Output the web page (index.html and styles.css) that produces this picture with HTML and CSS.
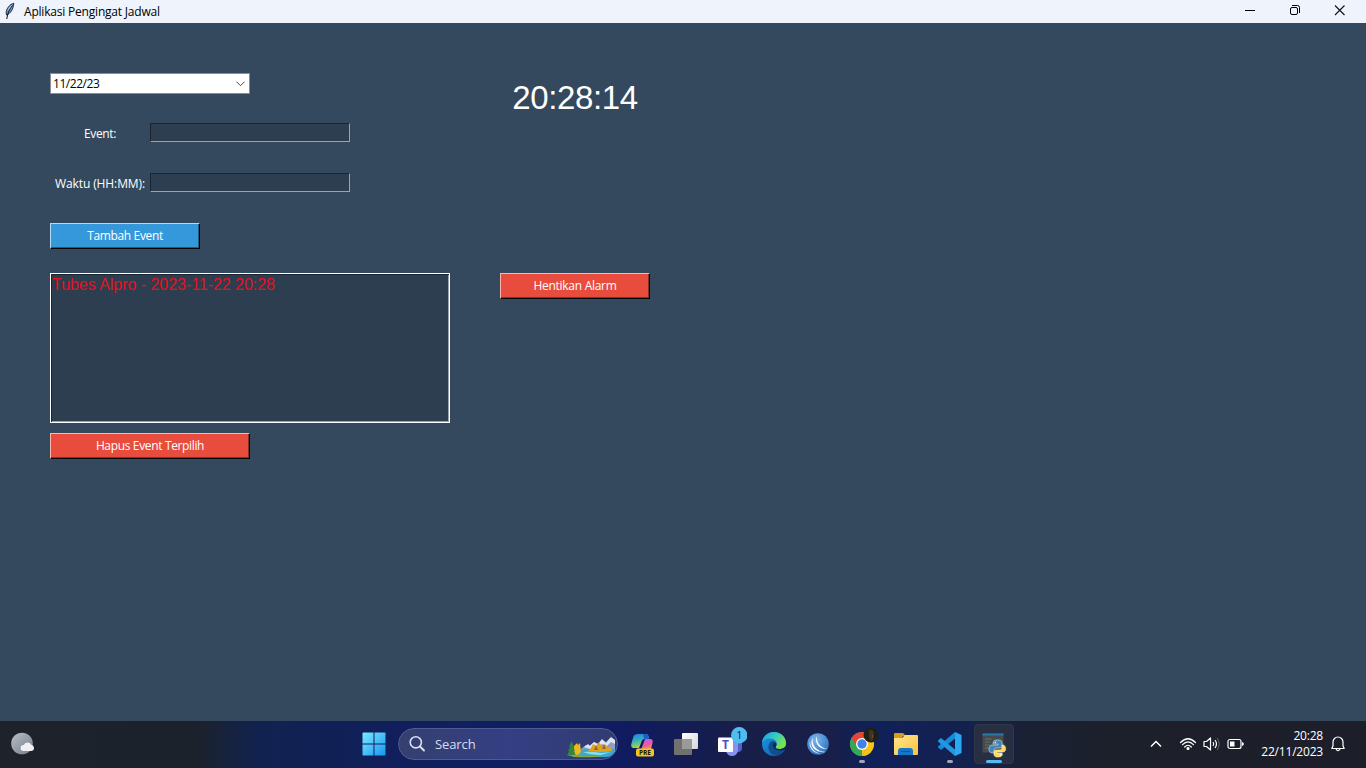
FILE: index.html
```html
<!DOCTYPE html>
<html lang="id">
<head>
<meta charset="utf-8">
<title>Aplikasi Pengingat Jadwal</title>
<link rel="stylesheet" href="styles.css">
</head>
<body>
<div class="desktop">
  <header class="titlebar">
    <svg class="feather" width="12" height="18" viewBox="0 0 12 18"><path d="M9.800 1.300C6 2 3 6 2.300 9.500 2 11 2.200 12.300 2.700 13 6.500 11.500 9.200 7.500 9.800 1.300z" fill="#6d98cf" stroke="#222d3f" stroke-width="1"/><path d="M8.500 3.500C5.500 7 3.500 11 2.800 17" fill="none" stroke="#111" stroke-width="1"/><path d="M7.300 3.500L4 8" stroke="#b8d0ee"/></svg>
    <h1 class="title">Aplikasi Pengingat Jadwal</h1>
    <div class="controls">
      <svg width="46" height="22" viewBox="0 0 46 22"><path d="M18 10.500h10" stroke="#000"/></svg>
      <svg width="45" height="22" viewBox="0 0 45 22" fill="none" stroke="#000"><rect x="17.500" y="7.500" width="7" height="7" rx="1.500"/><path d="M19 5.500h5.500a2 2 0 0 1 2 2V13"/></svg>
      <svg width="46" height="22" viewBox="0 0 46 22"><path d="M17 5.500l9.500 9.500M26.500 5.500l-9.500 9.500" stroke="#111" stroke-width="1.100"/></svg>
    </div>
  </header>

  <main class="app">
    <section class="form">
      <div class="combo"><span class="combo-value">11/22/23</span><svg width="9" height="6" viewBox="0 0 9 6"><path d="M.5.700l4 4 4-4" fill="none" stroke="#444"/></svg></div>
      <div class="field"><span class="label"><span class="t-event">Event:</span></span><div class="entry"></div></div>
      <div class="field"><span class="label"><span class="t-time">Waktu (HH:MM):</span></span><div class="entry"></div></div>
      <div class="btn add"><span class="t-add">Tambah Event</span></div>
      <div class="list"><div class="item">Tubes Alpro - 2023-11-22 20:28</div></div>
      <div class="btn delete"><span class="t-delete">Hapus Event Terpilih</span></div>
    </section>
    <section class="alarm">
      <div class="clock">20:28:14</div>
      <div class="btn stop"><span class="t-stop">Hentikan Alarm</span></div>
    </section>
  </main>

  <footer class="taskbar">
    <div class="weather">
      <svg width="26" height="26" viewBox="0 0 26 26"><defs><linearGradient id="moon" x1="0" y1="0" x2="1" y2="1"><stop offset="0" stop-color="#b9bfca"/><stop offset="1" stop-color="#747c88"/></linearGradient></defs><circle cx="12" cy="12.500" r="10.800" fill="url(#moon)"/><path d="M13.500 20a3 3 0 0 1 .2-6 4.200 4.200 0 0 1 7.500-.3 3.200 3.200 0 0 1 .3 6.300z" fill="#eef0f3"/></svg>
    </div>
    <nav class="apps">
      <div class="slot start"><svg width="24" height="24" viewBox="0 0 24 24"><defs><linearGradient id="win" x1="0" y1="0" x2="1" y2="1"><stop offset="0" stop-color="#7deaff"/><stop offset="1" stop-color="#1695f2"/></linearGradient></defs><path d="M1 .5h10.500v11H.5V1zM12.500.5h10.500l.5.500v10.500h-11zM.5 12.500h11v11H1l-.5-.5zM12.500 12.500h11V23l-.5.500H12.500z" fill="url(#win)"/></svg></div>
      <div class="search">
        <svg class="lens" width="18" height="18" viewBox="0 0 18 18"><circle cx="7.800" cy="7.300" r="5.600" fill="none" stroke="#d9deee" stroke-width="1.600"/><path d="M12 11.500l4 4" stroke="#d9deee" stroke-width="1.900" stroke-linecap="round"/></svg>
        <span class="search-text">Search</span>
        <svg class="scene" width="50" height="24" viewBox="0 0 50 24">
          <path d="M10 18L19 11l3 1 5-4 4 2 4-4 4 2 4-4 5 3v11z" fill="#8b9dcc"/><path d="M17 13l4-3 2 2 4-4 4 2 4-5 4 4 5-6 4 3v4l-4-2-4 4-5-2-4 3-4-1-4 3z" fill="#dfe4f4"/>
          <path d="M5 19q7-4 14-4h29q1 3-1 4-3 4-8 4H9q-4 0-4-2z" fill="#38a9ce"/><path d="M16 18q9-1 18 1l10-1-10 3q-12 0-18-3z" fill="#8ddce6"/>
          <path d="M21 17l3-3 2-4 3 2 3-4 3 5 3-3 3 4 3-1 1 4q-9 2-24 0z" fill="#dfa31c"/><path d="M27 16l2-5 2 5zM35 15l2-5 2 5z" fill="#936b22"/>
          <path d="M6 20l1-8 3-3 1 2 2-2 1 9-4 4z" fill="#f0b71c"/><path d="M4.500 7L2 13h1l-2 4h1l-2 5h9l-2-5h1l-2-4h1z" fill="#33843d"/><path d="M2 21q10-1 15 1h18q-8 2-28 1z" fill="#86a83b"/>
        </svg>
      </div>
      <div class="slot"><svg width="28" height="28" viewBox="0 0 28 28"><defs><linearGradient id="cpa" x1="0" y1="0" x2=".3" y2="1"><stop offset="0" stop-color="#277bdc"/><stop offset=".5" stop-color="#30b2c2"/><stop offset="1" stop-color="#b6d431"/></linearGradient><linearGradient id="cpb" x1="0" y1="0" x2=".4" y2="1"><stop offset="0" stop-color="#a566e8"/><stop offset=".6" stop-color="#ec5aa2"/><stop offset="1" stop-color="#f8945c"/></linearGradient></defs><path d="M10 4h8q2 0 2.500 2l.7 3h-5q-1.700 0-2.400 2L11 18H6q-3.500 0-2.700-4l2-7Q6 4 10 4z" fill="url(#cpa)"/><path d="M15 4h3q2 0 2.500 2l.7 3h-5z" fill="#245ac5"/><path d="M17 9h5q3.500 0 2.500 4l-2 8h-10z" fill="url(#cpb)"/><rect x="8" y="18.500" width="18" height="8" rx="2" fill="#fbc316"/><text x="17" y="25" class="pre">PRE</text></svg></div>
      <div class="slot"><svg width="28" height="28" viewBox="0 0 28 28"><defs><linearGradient id="tv" x1="0" y1="0" x2="1" y2="1"><stop offset="0" stop-color="#fff"/><stop offset="1" stop-color="#d4d4d7"/></linearGradient></defs><rect x="10" y="3" width="16" height="16" rx="1" fill="url(#tv)"/><rect x="2" y="9" width="18" height="16" rx="1" fill="#72716f"/><path d="M10 9h10v10H10z" fill="#9a9a99"/></svg></div>
      <div class="slot teams"><svg width="34" height="34" viewBox="0 0 34 34"><rect x="20" y="13" width="9" height="14" rx="4" fill="#5360c9"/><path d="M12 13h13v11a6 6 0 0 1-12 2z" fill="#8791ef"/><rect x="5" y="12.500" width="15" height="14.500" rx="1" fill="#fff"/><text x="12.500" y="24" class="tee">T</text><circle cx="26.200" cy="10.300" r="8.200" fill="#50bdf1"/><text x="26.300" y="14.300" class="one">1</text></svg></div>
      <div class="slot"><svg width="26" height="26" viewBox="0 0 26 26"><defs><linearGradient id="ea" x1="0" y1="0" x2="1" y2=".5"><stop offset="0" stop-color="#1b9de5"/><stop offset=".5" stop-color="#32c7cc"/><stop offset="1" stop-color="#79e34c"/></linearGradient><linearGradient id="eb" x1="0" y1="0" x2="1" y2="1"><stop offset="0" stop-color="#1c9bea"/><stop offset="1" stop-color="#12579c"/></linearGradient></defs><circle cx="13" cy="13" r="12" fill="url(#eb)"/><path d="M1 12C1.500 5.500 6.500 1 13 1c7 0 12 5 12 11 0 4-3 6-7 6-2.500 0-4-1-3.300-2.200 3-4.500-.7-8.300-5.700-8.300-4 0-7 2-8 4.500z" fill="url(#ea)"/><path d="M9.500 11c-5 5-.5 13 6 13.700 4-.7 7-3 8.500-6.200-3 2-8 2.500-10.500-.5-2-2-2.500-5 0-7-1-1.200-3-1-4 0z" fill="#124c91"/><path d="M13.500 11c2.500 1 2.500 3 1.200 4.800-.8 1.200.8 2.200 3.300 2.200 2 0 4.500-.5 7-2.500l-.8 2.800c-3 2.200-8 2-10.700-.3-2-2-2.500-5 0-7z" fill="#142556"/></svg></div>
      <div class="slot"><svg width="26" height="26" viewBox="0 0 26 26"><defs><radialGradient id="globe" cx=".4" cy=".3" r=".8"><stop offset="0" stop-color="#7eb7ee"/><stop offset="1" stop-color="#246bb9"/></radialGradient></defs><circle cx="13" cy="13" r="10.800" fill="url(#globe)"/><path d="M12 5c-1 7 4 12 10.500 13C15 19 8.500 12 12 5zM8 6.500c-2 8 4 14 12.500 14.500C11 22.500 3 15 8 6.500zM5 10c0 7 4.500 11.500 11 13C9 22.500 3 17 5 10z" fill="#fff"/></svg></div>
      <div class="slot running"><svg width="34" height="34" viewBox="0 0 34 34"><circle cx="17" cy="17" r="12" fill="#36a853"/><path d="M17 17L6.600 11A12 12 0 0 1 27.400 11H17z" fill="#e94335"/><path d="M17 11h10.400A12 12 0 0 1 17 29l5.200-9z" fill="#fbc116"/><path d="M6.600 11L12 20l5-3V11z" fill="#e94335"/><path d="M6.600 11l5.300 9 5.100 3-0 6A12 12 0 0 1 6.600 11z" fill="#36a853"/><path d="M17 29l5.200-9L17 23z" fill="#fbc116"/><circle cx="17" cy="17" r="6" fill="#fff"/><circle cx="17" cy="17" r="4.700" fill="#3e82ed"/><circle cx="26" cy="8" r="7.500" fill="#211e17"/><path d="M24 3q5-1 5 4l-1 6-3 1-1-5z" fill="#3d3423"/><path d="M27 7l1 2-1 3z" fill="#834e33"/></svg></div>
      <div class="slot"><svg width="28" height="26" viewBox="0 0 28 26"><defs><linearGradient id="fo" x1="0" y1="0" x2="1" y2="1"><stop offset="0" stop-color="#ffe68b"/><stop offset="1" stop-color="#f8c33e"/></linearGradient></defs><path d="M2 3q0-1 1-1h8l3 3h-3L9 8H2z" fill="#d69b20"/><path d="M2 7h8l3-3h12q1 0 1 1v18q0 1-1 1H3q-1 0-1-1z" fill="url(#fo)"/><path d="M6 24v-4q0-3 3-3h9q3 0 3 3v4z" fill="#1477ca"/><path d="M9 20.500h9" stroke="#0b589e"/></svg></div>
      <div class="slot running"><svg width="26" height="26" viewBox="0 0 26 26"><path d="M18 1v6.500L4 19 1 16.500v-1z" fill="#168bd6"/><path d="M18 25v-6.500L4 7 1 9.500v1z" fill="#2298e3"/><path d="M18 1l6.500 3v18L18 25z" fill="#2aa9f2"/></svg></div>
      <div class="slot active"><svg width="28" height="28" viewBox="0 0 28 28"><rect x="2.500" y="3.500" width="21" height="19" fill="#454b4e"/><path d="M2.500 3.500h21v2h-21z" fill="#2578a8"/><path d="M5 9h7M5 12h5M5 15h5M5 18h4" stroke="#50695b" stroke-width="1.300"/><path d="M17 10c-4 0-4 2-4 4h5v1h-6c-4 0-4 8 0 8h2v-3q0-2 2-2h4q2 0 2-2v-3c0-3-2-3-5-3z" fill="#3d85bc" stroke="#dbe8ee" stroke-width=".6"/><circle cx="15.300" cy="12.200" r=".8" fill="#fff"/><path d="M18 27c4 0 5-2 4-4h-5v-1h6c4 0 3-7 0-7h-1v3q0 2-2 2h-4q-2 0-2 2v2c0 3 2 3 4 3z" fill="#ffd957" stroke="#fff4c3" stroke-width=".6"/><circle cx="20.500" cy="24.700" r=".8" fill="#fff"/></svg></div>
    </nav>
    <div class="tray">
      <svg width="14" height="10" viewBox="0 0 14 10"><path d="M2 7.500l5-5 5 5" fill="none" stroke="#fff" stroke-width="1.500"/></svg>
      <svg class="wifi" width="18" height="16" viewBox="0 0 18 16" fill="none" stroke="#fff" stroke-width="1.200" stroke-linecap="round"><path d="M1.500 6.500Q9-1 16.500 6.500M3.500 8.700Q9 3 14.500 8.700M5.700 11Q9 7.500 12.300 11"/><circle cx="9" cy="12.500" r="1" fill="#fff"/></svg>
      <svg class="sound" width="17" height="16" viewBox="0 0 17 16" fill="none" stroke="#fff" stroke-width="1.200" stroke-linejoin="round"><path d="M1 5.500h2.500L7.500 2v12L3.500 10.500H1z"/><path d="M10 6q1.500 2 0 4M12 4q3 4 0 8"/><path d="M14 2q4.500 6 0 12" stroke="#53575e"/></svg>
      <svg class="battery" width="18" height="12" viewBox="0 0 18 12"><rect x="1" y="1.500" width="13" height="9" rx="2" fill="none" stroke="#fff" stroke-width="1.200"/><path d="M3 3.500h4.500v5H3zM15 4l1.700 1v2L15 8z" fill="#fff"/></svg>
      <div class="datetime"><div class="time">20:28</div><div class="date">22/11/2023</div></div>
      <svg class="bell" width="16" height="18" viewBox="0 0 16 18" fill="none" stroke="#fff" stroke-width="1.200" stroke-linejoin="round"><path d="M1.800 13.500L3 10.800V7a5 5 0 0 1 10 0v3.800l1.200 2.700zM6 14q2 3.500 4 0"/></svg>
    </div>
  </footer>
</div>
</body>
</html>
```
FILE: styles.css
```css
* { box-sizing: border-box; }
body { margin: 0; font-family: "Open Sans", "Noto Sans", sans-serif; font-size: 12px; overflow: hidden; }
svg { display: block; flex: none; }
.desktop { width: 1366px; height: 768px; display: flex; flex-direction: column; background: #34495e; }
.titlebar { height: 23px; flex: none; display: flex; align-items: flex-start; background: #eff3fb; color: #000; }
.feather { margin: 2px 0 0 4px; }
.title { margin: 3px 0 0 8px; font-size: 12px; font-weight: 400; line-height: 17px; letter-spacing: -0.2px; }
.controls { display: flex; margin-left: auto; margin-right: 2px; }
.app { flex: 1; padding: 50px; display: flex; gap: 50px; align-items: flex-start; color: #fff; }
.form { width: 400px; display: flex; flex-direction: column; }
.combo { width: 200px; height: 21px; padding: 0 4px 0 2px; display: flex; align-items: center; justify-content: space-between; background: #fff; border: 1px solid #8a8d91; color: #000; margin-bottom: 29px; }
.combo-value { line-height: 17px; letter-spacing: -0.45px; }
.field { display: flex; height: 20px; margin-bottom: 30px; }
.label { width: 100px; height: 22px; display: flex; justify-content: center; align-items: center; line-height: 18px; white-space: nowrap; }
.t-event { letter-spacing: -0.4px; }
.t-time { letter-spacing: -0.1px; }
.t-add, .t-delete, .t-stop { letter-spacing: -0.35px; padding-bottom: 2px; }
.t-stop { letter-spacing: -0.28px; }
.entry { width: 200px; height: 19px; background: #2c3e50; border: 1px solid; border-color: #1a2530 #9da4ab #9da4ab #1a2530; }
.btn { height: 26px; display: flex; align-items: center; justify-content: center; border: 1px solid; white-space: nowrap; }
.add { width: 150px; background: #3498db; border-color: #b4daf3 #000 #000 #b4daf3; box-shadow: inset -1px -1px #1f5b83; margin-bottom: 24px; }
.delete, .stop { background: #e74c3c; border-color: #f6b8b1 #000 #000 #f6b8b1; box-shadow: inset -1px -1px #8b2e24; }
.list { height: 150px; background: #2c3e50; border: 1px solid #fff; box-shadow: inset 1px 1px #1a2530, inset -1px -1px #9da4ab; margin-bottom: 10px; }
.item { padding: 1px; font: 16px/19px "Liberation Sans", Arial, sans-serif; color: #e90f1b; letter-spacing: -0.04px; }
.delete { width: 200px; }
.alarm { width: 150px; display: flex; flex-direction: column; }
.clock { height: 50px; margin-bottom: 150px; text-align: center; font: 33px/50px "Liberation Sans", Arial, sans-serif; letter-spacing: -0.4px; }
.taskbar { height: 47px; padding-bottom: 1px; flex: none; display: flex; align-items: center; color: #fff; background: linear-gradient(90deg, #1e222b 0, #1b222d 200px, #12224f 256px, #102057 340px, #101f63 500px, #101b61 620px, #171e48 740px, #181f48 830px, #10205a 870px, #14214d 970px, #1a2133 1030px, #1c202a 1120px, #1c1f29 100%); }
.weather { width: 351px; padding-left: 10px; }
.apps { display: flex; align-items: center; height: 46px; }
.slot { width: 44px; height: 40px; display: flex; align-items: center; justify-content: center; position: relative; }
.start { padding-left: 1px; }
.search { width: 220px; height: 32px; margin: 0 2px 0 3px; border-radius: 16px; border: 1px solid #505b91; background: linear-gradient(90deg, #353f70, #343f84 50%, #303c70); display: flex; align-items: center; padding-left: 9px; overflow: hidden; }
.search-text { margin-left: 9px; font-size: 13px; color: #d8dcf0; letter-spacing: -0.1px; }
.scene { margin-left: auto; margin-top: 4px; }
.teams { padding-bottom: 4px; }
.pre { font: 700 6.500px "Open Sans", sans-serif; text-anchor: middle; fill: #171717; }
.tee { font: 700 12px "Open Sans", sans-serif; text-anchor: middle; fill: #4b53bc; }
.one { font: 11px "Open Sans", sans-serif; text-anchor: middle; fill: #10243a; }
.running::after, .active::after { content: ""; position: absolute; left: 19px; bottom: 1px; width: 6px; height: 3px; border-radius: 2px; background: #a1a6b9; }
.active::before { content: ""; position: absolute; inset: 0 2px; border: 1px solid #303646; border-radius: 4px; background: #292f42; }
.active svg { position: relative; }
.active::after { left: 14px; width: 16px; background: #54bcf2; }
.tray { margin-left: auto; display: flex; align-items: center; padding-right: 20px; }
.wifi { margin-left: 16px; }
.sound { margin-left: 6px; }
.battery { margin-left: 7px; }
.datetime { width: 78px; text-align: right; line-height: 16px; letter-spacing: -0.2px; }
.bell { margin-left: 7px; }
```
